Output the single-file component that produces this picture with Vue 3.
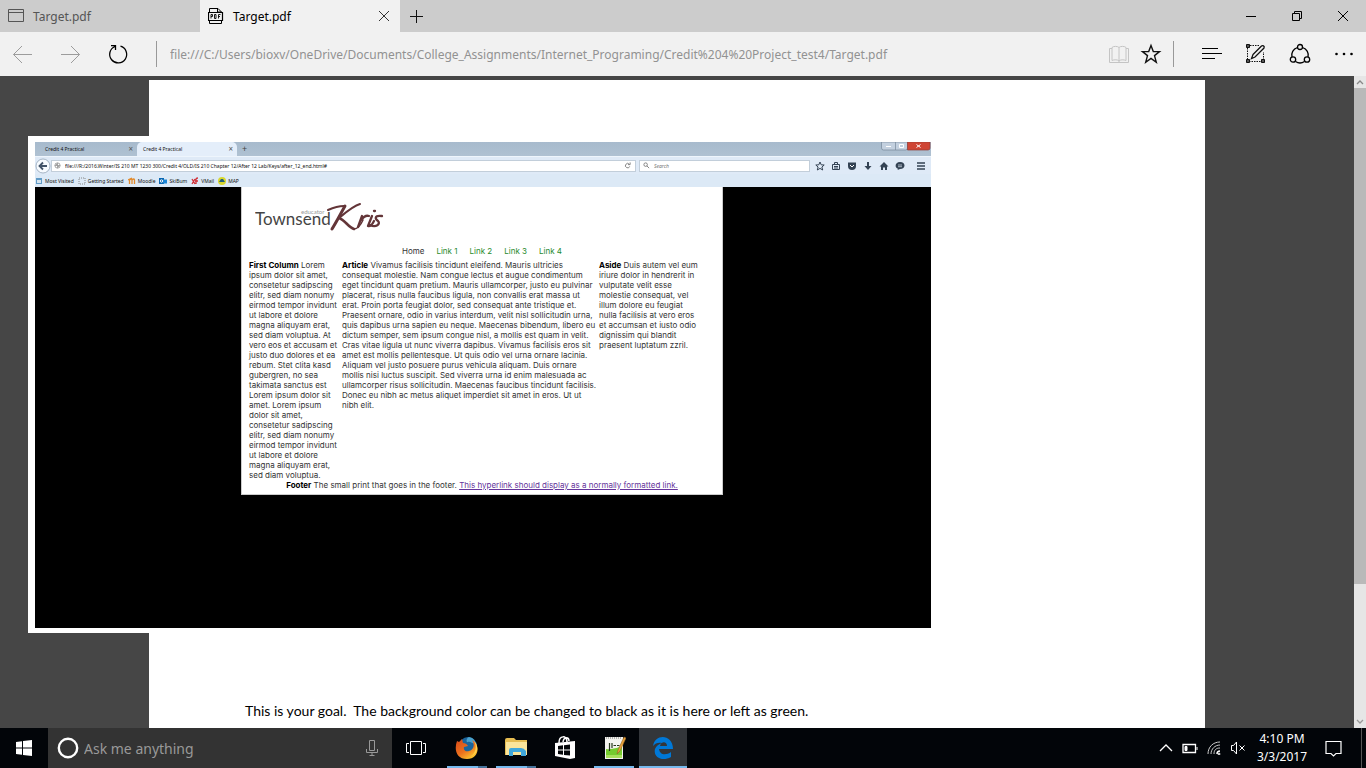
<script setup>
import { ref } from 'vue'

const address = ref('file:///C:/Users/bioxv/OneDrive/Documents/College_Assignments/Internet_Programing/Credit%204%20Project_test4/Target.pdf')
const innerAddress = ref('file:///R:/2016.Winter/IS 210 MT 1230 300/Credit 4/OLD/IS 210 Chapter 12/After 12 Lab/Keys/after_12_end.html#')
const query = ref('')
const innerQuery = ref('')

const links = ['Link 1', 'Link 2', 'Link 3', 'Link 4']

const firstColumn = `Lorem
ipsum dolor sit amet,
consetetur sadipscing
elitr, sed diam nonumy
eirmod tempor invidunt
ut labore et dolore
magna aliquyam erat,
sed diam voluptua. At
vero eos et accusam et
justo duo dolores et ea
rebum. Stet clita kasd
gubergren, no sea
takimata sanctus est
Lorem ipsum dolor sit
amet. Lorem ipsum
dolor sit amet,
consetetur sadipscing
elitr, sed diam nonumy
eirmod tempor invidunt
ut labore et dolore
magna aliquyam erat,
sed diam voluptua.`

const article = `Vivamus facilisis tincidunt eleifend. Mauris ultricies
consequat molestie. Nam congue lectus et augue condimentum
eget tincidunt quam pretium. Mauris ullamcorper, justo eu pulvinar
placerat, risus nulla faucibus ligula, non convallis erat massa ut
erat. Proin porta feugiat dolor, sed consequat ante tristique et.
Praesent ornare, odio in varius interdum, velit nisl sollicitudin urna,
quis dapibus urna sapien eu neque. Maecenas bibendum, libero eu
dictum semper, sem ipsum congue nisl, a mollis est quam in velit.
Cras vitae ligula ut nunc viverra dapibus. Vivamus facilisis eros sit
amet est mollis pellentesque. Ut quis odio vel urna ornare lacinia.
Aliquam vel justo posuere purus vehicula aliquam. Duis ornare
mollis nisi luctus suscipit. Sed viverra urna id enim malesuada ac
ullamcorper risus sollicitudin. Maecenas faucibus tincidunt facilisis.
Donec eu nibh ac metus aliquet imperdiet sit amet in eros. Ut ut
nibh elit.`

const aside = `Duis autem vel eum
iriure dolor in hendrerit in
vulputate velit esse
molestie consequat, vel
illum dolore eu feugiat
nulla facilisis at vero eros
et accumsan et iusto odio
dignissim qui blandit
praesent luptatum zzril.`
</script>

<template>
  <div class="desktop">
    <header class="tabs">
      <div class="tab">
        <svg width="16" height="16" viewBox="0 0 16 16" fill="none" stroke="#555"><path d="M.5 1.500h15v12H.5zM.5 4.500h15" /></svg>
        <span>Target.pdf</span>
      </div>
      <div class="tab active">
        <svg width="16" height="16" viewBox="0 0 16 16" fill="none" stroke="#000"><path d="M1.500 4V.5h8.500L13.500 4M9.500.5V4h4M1.500 12v3.500h12V12" /><path d="M.5 4.500h14v8H.5z" fill="#f1f1f1" stroke-width="1.200" /><path d="M3 10.500v-4h1.500v2H3M6.500 6.500H8v4H6.500zM10.500 10.500v-4h2M10.500 8.500H12" stroke-width=".9" /></svg>
        <span>Target.pdf</span>
        <button class="close" aria-label="Close tab"><svg width="12" height="12" viewBox="0 0 12 12" fill="none" stroke="#333"><path d="M1 1l10 10M11 1L1 11" /></svg></button>
      </div>
      <button class="new-tab" aria-label="New tab"><svg width="14" height="14" viewBox="0 0 14 14" fill="none" stroke="#111"><path d="M7.500 1v13M1 7.500h13" /></svg></button>
      <div class="window-buttons">
        <button aria-label="Minimize"><svg width="12" height="12" viewBox="0 0 12 12" stroke="#000"><path d="M1 6.500h10" /></svg></button>
        <button aria-label="Restore"><svg width="12" height="12" viewBox="0 0 12 12" fill="none" stroke="#000"><path d="M1.500 3.500h7v7h-7zM3.500 3.500v-2h7v7h-2" /></svg></button>
        <button aria-label="Close"><svg width="12" height="12" viewBox="0 0 12 12" fill="none" stroke="#000"><path d="M1 1l10 10M11 1L1 11" /></svg></button>
      </div>
    </header>

    <nav class="toolbar">
      <div class="history">
        <button aria-label="Back"><svg width="24" height="24" viewBox="0 0 24 24" fill="none" stroke="#9c9c9c"><path d="M22 12.500H3.500M12 4l-8.500 8.500L12 21" /></svg></button>
        <button aria-label="Forward"><svg width="24" height="24" viewBox="0 0 24 24" fill="none" stroke="#9c9c9c"><path d="M3 12.500h18.500M13 4l8.500 8.500L13 21" /></svg></button>
        <button aria-label="Refresh"><svg width="24" height="24" viewBox="0 0 24 24" fill="none" stroke="#000" stroke-width="1.300"><path d="M14.500 4.200A8.500 8.500 0 1 1 9 4.500M5 3.700h4.500V8" /></svg></button>
      </div>
      <span class="rule"></span>
      <input v-model="address" class="address" aria-label="Address">
      <div class="page-tools">
        <button aria-label="Reading view"><svg width="24" height="24" viewBox="0 0 24 24" fill="none" stroke="#c4c4c4"><path d="M12 5.500v15M12 5.500c-1-1.500-6-1.500-7 0v13c2-1 6-1 7 .5 1-1.500 5-1.500 7-.5v-13c-1-1.500-6-1.500-7 0M5 6.500H2.500v14h19v-14H19" /></svg></button>
        <button aria-label="Favorite"><svg width="24" height="24" viewBox="0 0 24 24" fill="none" stroke="#111" stroke-width="1.400"><path d="M12 3.500l2.300 6.100h6.200l-5 4 1.800 6.600-5.300-3.800-5.300 3.800 1.800-6.600-5-4h6.200z" /></svg></button>
      </div>
      <span class="rule"></span>
      <div class="hub-tools">
        <button aria-label="Hub"><svg width="24" height="24" viewBox="0 0 24 24" stroke="#000"><path d="M2 6.500h16M2 11.500h20M2 16.500h13" /></svg></button>
        <button aria-label="Make a Web Note"><svg width="24" height="24" viewBox="0 0 24 24" fill="none" stroke="#111"><path d="M3.500 6v13M5 19.500h14M19.500 18v-8M6 3.500h9" stroke-dasharray="1.500 1" /><path d="M2.500 2.500h3v3h-3zM2.500 17.500h3v3h-3zM17.500 17.500h3v3h-3z" fill="#555" /><path d="M9 12.500L17.500 4c1-1 3.500 0 2.500 2l-9 9-3.500 1.500z" stroke-width="1.300" /></svg></button>
        <button aria-label="Share"><svg width="24" height="24" viewBox="0 0 24 24" fill="none" stroke="#000" stroke-width="1.300"><circle cx="12" cy="5" r="2.500" /><circle cx="5" cy="17.500" r="2.700" /><circle cx="19" cy="17.500" r="2.700" /><path d="M9.500 5.500c-4.500 1.500-6.500 5.500-5.500 9.500M14.500 5.500c4.500 1.500 6.500 5.500 5.500 9.500M7.500 19.500c3 2 6 2 9 0" /></svg></button>
        <button aria-label="More"><svg width="24" height="24" viewBox="0 0 24 24"><circle cx="4.500" cy="12" r="1.300" /><circle cx="12" cy="12" r="1.300" /><circle cx="19.500" cy="12" r="1.300" /></svg></button>
      </div>
    </nav>

    <main class="viewer">
      <div class="canvas">
        <article class="sheet">
          <section class="figure">
            <div class="shot">
              <div class="fx-tabs">
                <div class="fx-tab">Credit 4 Practical<span class="fx-x">×</span></div>
                <div class="fx-tab fx-current">Credit 4 Practical<span class="fx-x">×</span></div>
                <span class="fx-plus">+</span>
                <svg class="fx-caption" width="50" height="9" viewBox="0 0 50 9"><path d="M.5 0h26v6q0 2-2 2h-22q-2 0-2-2z" fill="#c3d0df" stroke="#75869a" stroke-width=".7" /><path d="M26.500 0H49v6q0 2-2 2H26.500z" fill="#cf4534" stroke="#923c36" stroke-width=".7" /><path d="M14.500 0v8" stroke="#75869a" stroke-width=".7" /><path d="M5 4.500h5M18.500 2.500h4v3h-4zM35.500 2.500l4 3M39.500 2.500l-4 3" stroke="#fff" fill="none" /></svg>
              </div>
              <div class="fx-nav">
                <svg class="fx-back" width="16" height="16" viewBox="0 0 16 16"><circle cx="8" cy="8" r="7" fill="#f7fbff" stroke="#8799ad" stroke-width=".7" /><path d="M4 8h8M8 4.500L4.500 8 8 11.500" fill="none" stroke="#435469" stroke-width="1.800" /></svg>
                <div class="fx-address">
                  <svg width="7" height="7" viewBox="0 0 8 8" fill="none" stroke="#999"><circle cx="4" cy="4" r="3" /><path d="M1 4h6M4 1v6M2 2l4 4" /></svg>
                  <input v-model="innerAddress" aria-label="Embedded page address">
                  <svg width="7" height="7" viewBox="0 0 8 8" fill="none" stroke="#777"><path d="M6.500 5A2.500 2.500 0 1 1 6 2.500M4.500 3H7V.5" /></svg>
                </div>
                <div class="fx-search">
                  <svg width="7" height="7" viewBox="0 0 8 8" fill="none" stroke="#777"><circle cx="3" cy="3" r="2" /><path d="M4.500 4.500L7 7" /></svg>
                  <input v-model="innerQuery" placeholder="Search" aria-label="Search">
                </div>
                <div class="fx-tools">
                  <svg viewBox="0 0 10 10" fill="none" stroke="#344354"><path d="M5 1l1.200 2.800 3 .2-2.300 2 .8 3L5 7.400 2.300 9l.8-3L.8 4l3-.2z" /></svg>
                  <svg viewBox="0 0 10 10" fill="none" stroke="#344354"><path d="M1.500 3.500h7v5h-7zM3.500 3V1.500h3V3M3 5.500h4M3 7h4" /></svg>
                  <svg viewBox="0 0 10 10" fill="#344354"><path d="M1 1.500h8V5a4 4 0 0 1-8 0z" /><path d="M3 4l2 2 2-2" fill="none" stroke="#fff" /></svg>
                  <svg viewBox="0 0 10 10" fill="#344354"><path d="M4 1h2v4h2.500L5 9 1.500 5H4z" /></svg>
                  <svg viewBox="0 0 10 10" fill="#344354"><path d="M5 1l4.500 4.500H8V9H6V6.500H4V9H2V5.500H.5z" /></svg>
                  <svg viewBox="0 0 10 10" fill="#344354"><path d="M5 1c6 0 6 7 0 7L2.500 9 3 7.700C-.8 6.500 0 1 5 1z" /><path d="M3 4h4M3 5.700h4" stroke="#dce8f3" stroke-width=".7" /></svg>
                  <svg class="fx-menu" viewBox="0 0 10 10" stroke="#344354" stroke-width="1.500"><path d="M1 2h8M1 5h8M1 8h8" /></svg>
                </div>
              </div>
              <div class="fx-bookmarks">
                <a href="#"><svg viewBox="0 0 8 8"><path d="M1 1h6v6H1z" fill="#619bc6" /><path d="M2 3h4v3H2z" fill="#d7e5ef" /></svg>Most Visited</a>
                <a href="#"><svg viewBox="0 0 8 8"><path d="M1 1h6v6H1z" fill="none" stroke="#888" stroke-dasharray="1" /></svg>Getting Started</a>
                <a href="#"><svg viewBox="0 0 8 8"><path d="M1.500 7V3q2-2 2.500 0v4M4 3q2-2 2.500 0v4M0 3l4-2" fill="none" stroke="#e28b2d" stroke-width="1.300" /></svg>Moodle</a>
                <a href="#"><svg viewBox="0 0 8 8"><path d="M0 1h5v6H0z" fill="#0966b1" /><path d="M4 2.500h4v4H4z" fill="#1b85d5" /><circle cx="2.500" cy="4" r="1.200" fill="none" stroke="#fff" /></svg>SkiBum</a>
                <a href="#"><svg viewBox="0 0 8 8"><path d="M1 2l3 5M4 2L1 7M5 7V2q0-1 2-1M4 4h3" fill="none" stroke="#d12f36" stroke-width="1.300" /></svg>VMail</a>
                <a href="#"><svg viewBox="0 0 8 8"><circle cx="4" cy="4" r="4" fill="#d9d82f" /><path d="M1 5l2-3h2l2 3z" fill="#24607b" /></svg>MAP</a>
              </div>
              <div class="site">
                <div class="site-page">
                  <svg class="logo" width="132" height="34" viewBox="0 0 132 34">
                    <text x="0" y="24" class="logo-name">Townsend</text>
                    <text x="46" y="13" class="logo-small">educator</text>
                    <g fill="none" stroke="#633538" stroke-linecap="round"><path d="M73 9q9-4 16-4" stroke-width="2" /><path d="M90 5C86 12 82 20 77 28" stroke-width="3" /><path d="M105 3C98 5 90 12 84 17" stroke-width="2" /><path d="M84 17c6 2 9 9 15 11" stroke-width="2.600" /><path d="M99 28q5 0 9-9" stroke-width="1.500" /><path d="M107 15l-4 11M106 19c3-4 5-5 8-4M117 15l-4 10M113 25q3 1 6-5M119 10l1 0M127 15c-8-1-7 3-4 5 3 3-2 7-8 4" stroke-width="2.300" /></g>
                  </svg>
                  <nav class="site-nav"><span>Home</span><a v-for="link in links" :key="link" href="#">{{ link }}</a></nav>
                  <div class="columns">
                    <p><b>First Column</b> {{ firstColumn }}</p>
                    <p><b>Article</b> {{ article }}</p>
                    <p><b>Aside</b> {{ aside }}</p>
                  </div>
                  <footer><b>Footer</b> The small print that goes in the footer. <a href="#">This hyperlink should display as a normally formatted link.</a></footer>
                </div>
              </div>
            </div>
          </section>
          <p class="goal">This is your goal.&nbsp; The background color can be changed to black as it is here or left as green.</p>
        </article>
      </div>
      <div class="scrollbar">
        <button aria-label="Scroll up"><svg width="8" height="6" viewBox="0 0 8 6" fill="none" stroke="#888" stroke-width="1.300"><path d="M1 5l3-3 3 3" /></svg></button>
        <div class="track"><div class="thumb"></div></div>
        <button aria-label="Scroll down"><svg width="8" height="6" viewBox="0 0 8 6" fill="none" stroke="#999" stroke-width="1.300"><path d="M1 1l3 3 3-3" /></svg></button>
      </div>
    </main>

    <footer class="taskbar">
      <button class="start" aria-label="Start"><svg width="16" height="16" viewBox="0 0 16 16" fill="#fff"><path d="M0 2l6-.8v6.300H0zM7 1l9-1v7.500H7zM0 8.500h6v6.300L0 14zM7 8.500h9V16l-9-1z" /></svg></button>
      <div class="cortana">
        <svg width="22" height="22" viewBox="0 0 22 22" fill="none" stroke="#fff"><circle cx="11" cy="11" r="9.200" stroke-width="2.400" /></svg>
        <input v-model="query" placeholder="Ask me anything" aria-label="Ask me anything">
        <button aria-label="Voice search"><svg width="12" height="16" viewBox="0 0 12 16" fill="none" stroke="#999"><path d="M3.500.5h5v10h-5zM.5 9v3.500h11V9M6 12.500v3M3.500 15.500h5" /></svg></button>
      </div>
      <div class="apps">
        <button class="task-view" aria-label="Task view"><svg width="20" height="14" viewBox="0 0 20 14" fill="none" stroke="#fff"><path d="M4.500.5h11v13h-11zM3 2.500H.5v9H3M17 2.500h2.500v9H17" /></svg></button>
        <button class="running stacked" aria-label="Firefox"><svg width="24" height="24" viewBox="0 0 24 24"><defs><linearGradient id="fox" x2=".7" y2="1"><stop stop-color="#d44818" /><stop offset=".6" stop-color="#ed711e" /><stop offset="1" stop-color="#ffc82f" /></linearGradient></defs><circle cx="13" cy="10" r="9" fill="#1b659c" /><path d="M14 1c5 1 6 4 7 7-4 0-6-3-8-2-2 1-2-4 1-5z" fill="#4ba1cb" /><path d="M2 5l2 1 3-3 1 4c2 0 4 1 5 3l-4 1c-1 3 2 5 5 4 5-1 6-7 3-11 9 5 7 19-5 19C1 23-1 13 2 5z" fill="url(#fox)" /><path d="M19 5c3 5 2 12-3 15 6-1 9-9 3-15z" fill="#ffd24a" /></svg></button>
        <button class="running stacked" aria-label="File Explorer"><svg width="24" height="24" viewBox="0 0 24 24"><path d="M1 4q0-2 2-2h7l2 2h11v15H1z" fill="#e6bd52" /><path d="M2 6h21v13H2z" fill="#fbe59b" /><path d="M5 20v-6q0-2 2-2h10q3 0 5 3v5h-5v-4h-8v4z" fill="#41a8db" /></svg></button>
        <button aria-label="Store"><svg width="24" height="24" viewBox="0 0 24 24"><path d="M2 7l20-2v17l-5 1L2 20z" fill="#fff" /><path d="M6 7c0-8 8-8 8-1M10 6c1-6 6-5 6-1" fill="none" stroke="#fff" stroke-width="1.500" /><path d="M5 10l5-.7v4.200H5zM11 9.200l6-.8v5.100h-6zM5 14.500h5v4.300l-5-.7zM11 14.500h6v5.100l-6-.7z" fill="#030609" /></svg></button>
        <button class="running" aria-label="Notepad++"><svg width="24" height="24" viewBox="0 0 24 24"><path d="M3 1h18v22H3z" fill="#f4f4f0" /><path d="M4 13q8 1 16-3v12H4z" fill="#75cc2f" /><path d="M4 19h16v3H4z" fill="#a8e05c" /><path d="M7.500 7v8M10 7v5M11.500 9.500h2.500M15 9.500h2.500" stroke="#26371c" stroke-width="1.200" fill="none" /><path d="M4 2h16" stroke="#777" stroke-dasharray="1" /><path d="M22 1l-6 13-1 4 3-3 6-13z" fill="#e9a13b" stroke="#946421" stroke-width=".6" /></svg></button>
        <button class="running selected" aria-label="Edge"><svg width="24" height="24" viewBox="0 0 24 24"><path d="M2 10C4-3 22-2 22 13H8c1 7 8 6 12 3v5C11 26 2 21 4 13c1-3 4-5 7-6-3-1-7 0-9 3zM9 10h7c0-5-6-5-7 0z" fill="#0078d7" /></svg></button>
      </div>
      <div class="tray">
        <svg width="14" height="14" viewBox="0 0 14 14" fill="none" stroke="#fff" stroke-width="1.300"><path d="M1 10l6-6 6 6" /></svg>
        <svg width="16" height="14" viewBox="0 0 16 14" fill="none" stroke="#fff"><path d="M1 3.500h12.500v8H1z" stroke-width="1.300" /><path d="M3 5.500h2v4H3zM15 6v3" fill="#fff" /></svg>
        <svg width="14" height="14" viewBox="0 0 14 14" fill="none" stroke="#ccc"><path d="M1 13C1 6 6 1 13 1M4 13c0-5 4-9 9-9M7 13c0-4 2-6 6-6" /><path d="M10 13c0-2 1-3 3-3" stroke="#fff" stroke-width="1.500" /><circle cx="12" cy="13" r="1" fill="#fff" /></svg>
        <svg width="16" height="14" viewBox="0 0 16 14" fill="none" stroke="#fff"><path d="M1.500 4.500h2L6.500 1v12l-3-3.500h-2zM9.500 4.500l5 5M14.500 4.500l-5 5" /></svg>
        <time>4:10 PM<br>3/3/2017</time>
        <button aria-label="Notifications"><svg width="17" height="17" viewBox="0 0 17 17" fill="none" stroke="#fff" stroke-width="1.200"><path d="M1 1.500h15v12h-5L8.500 16 6 13.500H1z" /></svg></button>
      </div>
    </footer>
  </div>
</template>

<style>
body { margin: 0; }
</style>

<style scoped>
* { box-sizing: border-box; }
button { display: flex; align-items: center; justify-content: center; margin: 0; padding: 0; border: 0; background: none; font: inherit; color: inherit; }
input { min-width: 0; padding: 0; border: 0; outline: 0; background: none; font: inherit; color: inherit; }
p { margin: 0; }
svg { flex: none; }
.desktop { display: flex; flex-direction: column; height: 100vh; overflow: hidden; font: 13px "Noto Sans", sans-serif; }

.tabs { display: flex; flex: none; height: 32px; background: #ccc; }
.tab { display: flex; align-items: center; gap: 9px; width: 200px; padding-left: 8px; font-size: 12px; color: #555; }
.active { padding-right: 10px; background: #f1f1f1; color: #000; }
.close { margin-left: auto; }
.new-tab { width: 32px; }
.window-buttons { display: flex; margin-left: auto; }
.window-buttons button { width: 46px; }

.toolbar { display: flex; align-items: center; flex: none; height: 44px; padding: 0 10px; background: #f1f1f1; }
.history { display: flex; gap: 24px; margin-right: 26px; }
.rule { width: 1px; height: 26px; background: #999; }
.address { flex: 1; margin: 0 13px; color: #929292; font-size: 12px; }
.page-tools { display: flex; gap: 8px; margin-right: 10px; }
.hub-tools { display: flex; gap: 20px; margin-left: 26px; }

.viewer { display: flex; flex: 1; min-height: 0; background: #464646; }
.canvas { flex: 1; min-width: 0; overflow: hidden; padding: 4px 149px 0; }
.sheet { min-height: 100%; padding-top: 56px; background: #fff; }
.figure { width: 903px; margin-left: -121px; padding: 6px 0 5px 7px; background: #fff; }
.goal { margin: 68px 0 0 96px; font: 14px/20px Lato, sans-serif; white-space: nowrap; }
.scrollbar { display: flex; flex-direction: column; width: 12px; background: #e6e6e6; }
.scrollbar button { height: 12px; }
.track { flex: 1; }
.thumb { height: 79%; background: #b9b9b9; }

.shot { background: #dce9f6; font: 5px/8px "Noto Sans", sans-serif; color: #111; }
.fx-tabs { display: flex; align-items: center; height: 14px; background: linear-gradient(#a7bacd, #afc1d2); }
.fx-tab { display: flex; justify-content: space-between; align-items: center; width: 102px; height: 14px; padding: 0 4px 0 10px; }
.fx-current { width: 100px; padding-left: 6px; border-radius: 5px 5px 0 0; background: #e4eefa; }
.fx-x { font-size: 8px; color: #555; }
.fx-plus { margin-left: 5px; font-size: 9px; color: #444; }
.fx-caption { align-self: flex-start; margin-left: auto; }
.fx-nav { display: flex; align-items: center; height: 18px; border-top: 1px solid #eef5fc; background: #dfeaf7; }
.fx-address, .fx-search { display: flex; align-items: center; gap: 4px; height: 12px; border: 1px solid #c2ceda; background: #fff; }
.fx-address { flex: 1; padding: 0 4px 0 2px; }
.fx-address input { flex: 1; }
.fx-search { width: 171px; margin-left: 3px; padding-left: 3px; font-style: italic; }
.fx-tools { display: flex; width: 121px; padding: 0 5px; gap: 6px; }
.fx-tools svg { width: 10px; height: 10px; }
.fx-tools .fx-menu { margin-left: 5px; }
.fx-bookmarks { display: flex; align-items: center; gap: 4px; height: 13px; }
.fx-bookmarks a { display: flex; align-items: center; gap: 2px; color: inherit; text-decoration: none; }
.fx-bookmarks svg { width: 8px; height: 8px; }
.site { height: 441px; padding: 0 208px 0 206px; background: #000; }
.site-page { height: 308px; padding: 14px 7px 0; border: 1px solid #ccc; border-top: 0; background: #fff; font: 8px/10px Inter, sans-serif; color: #333; }
.logo { display: block; margin-left: 6px; }
.logo-name { font: 17px Lato, sans-serif; fill: #444; }
.logo-small { font: 6px Lato, sans-serif; fill: #999; }
.site-nav { display: flex; justify-content: center; gap: 12px; margin-top: 11px; }
.site-nav a { color: #278a2c; text-decoration: none; }
.columns { display: grid; grid-template-columns: 93px 257px 1fr; margin-top: 4px; white-space: pre; }
.columns b, footer b { color: #000; }
.site-page footer { white-space: nowrap; text-align: center; }
.site-page footer a { color: #65349b; }

.taskbar { display: flex; flex: none; height: 40px; background: #020509; color: #fff; }
.start { width: 48px; }
.cortana { display: flex; align-items: center; width: 344px; padding: 0 14px 0 9px; background: #333; font-size: 14px; }
.cortana input { flex: 1; margin-left: 5px; }
.cortana input::placeholder { color: #999; opacity: 1; }
.apps { display: flex; gap: 1px; }
.apps button { position: relative; width: 48px; }
.apps .task-view { margin-right: 2px; }
.running::after { content: ""; position: absolute; right: 4px; bottom: 0; left: 4px; height: 2px; background: #76b9ed; }
.stacked::after { background: linear-gradient(90deg, #76b9ed 78%, #46739b 78%); }
.selected { background: #33363a; }
.selected::after { right: 0; left: 0; }
.tray { display: flex; align-items: center; margin-left: auto; margin-right: 4px; padding-right: 19px; border-right: 1px solid #555; }
.tray svg { margin-right: 9px; }
.tray time { width: 54px; font-size: 12px; line-height: 18px; text-align: center; }
.tray button { margin-left: 16px; }
.tray button svg { margin: 0; }
</style>
